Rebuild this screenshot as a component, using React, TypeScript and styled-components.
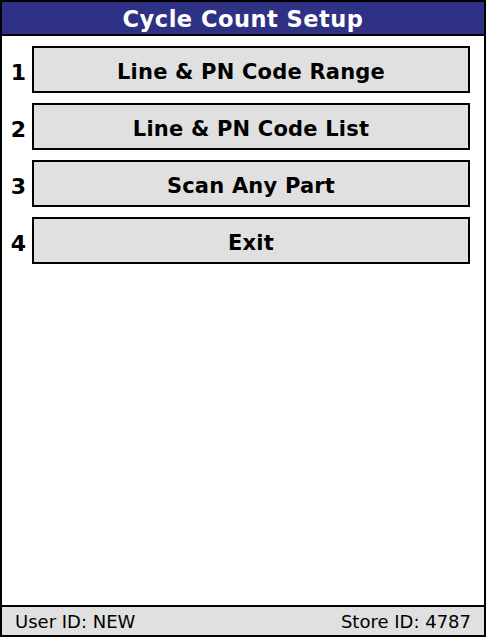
import React from "react";
import styled, { createGlobalStyle } from "styled-components";

const GlobalStyle = createGlobalStyle`
  html, body { margin: 0; padding: 0; background: #fff; }
  * { box-sizing: border-box; }
`;

const Frame = styled.div`
  width: 486px;
  height: 637px;
  border: 2px solid #000;
  display: flex;
  flex-direction: column;
  font-family: "DejaVu Sans", Verdana, sans-serif;
  background: #fff;
`;

const Header = styled.div`
  height: 34px;
  background: #2e3184;
  border-bottom: 2px solid #000;
  color: #fff;
  font-weight: bold;
  font-size: 22.5px;
  display: flex;
  align-items: center;
  justify-content: center;
  letter-spacing: 0.5px;
  padding-top: 1px;
`;

const Menu = styled.div`
  display: flex;
  flex-direction: column;
  gap: 10px;
  padding: 10px 14px 0 0;
`;

const Row = styled.div`
  display: grid;
  grid-template-columns: 30px 1fr;
  align-items: center;
`;

const Num = styled.span`
  font-weight: bold;
  font-size: 22px;
  color: #000;
  text-align: center;
  padding: 5px 0 0 3px;
`;

const MenuButton = styled.button`
  height: 47px;
  border: 2px solid #000;
  background: #e0e0e0;
  font-family: "DejaVu Sans", Verdana, sans-serif;
  font-weight: bold;
  font-size: 21px;
  letter-spacing: 0.2px;
  color: #000;
  padding: 5px 0 0 0;
  cursor: pointer;
`;

const Spacer = styled.div`
  flex: 1;
`;

const Footer = styled.div`
  height: 30px;
  border-top: 2px solid #000;
  background: #e0e0e0;
  display: flex;
  align-items: center;
  justify-content: space-between;
  padding: 0 13px;
  font-size: 18px;
  color: #000;
`;

const items = [
  "Line & PN Code Range",
  "Line & PN Code List",
  "Scan Any Part",
  "Exit",
];

export default function App() {
  return (
    <>
      <GlobalStyle />
      <Frame>
        <Header>Cycle Count Setup</Header>
        <Menu>
          {items.map((label, i) => (
            <Row key={label}>
              <Num>{i + 1}</Num>
              <MenuButton>{label}</MenuButton>
            </Row>
          ))}
        </Menu>
        <Spacer />
        <Footer>
          <span>User ID: NEW</span>
          <span>Store ID: 4787</span>
        </Footer>
      </Frame>
    </>
  );
}
